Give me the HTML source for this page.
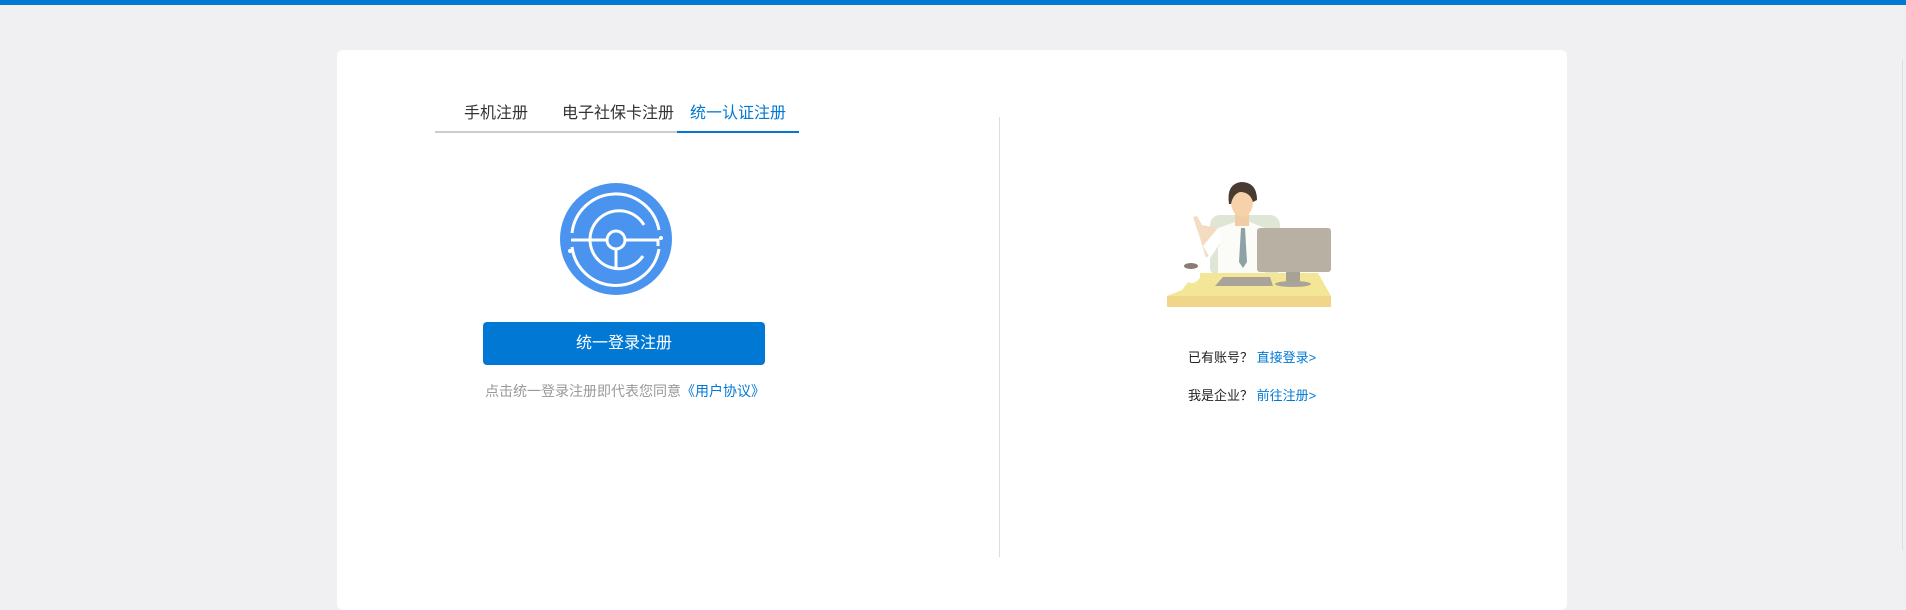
<!DOCTYPE html>
<html><head><meta charset="utf-8"><style>
body{margin:0;width:1906px;height:550px;background:#f0f0f2;font-family:"Liberation Sans","Noto Sans CJK SC",sans-serif;position:relative;overflow:hidden}
.top{position:absolute;left:0;top:0;width:1906px;height:5px;background:#0078d4}
.card{position:absolute;left:337px;top:50px;width:1230px;height:560px;background:#fff;border-radius:6px}
.abs{position:absolute}
.tab{position:absolute;top:99px;font-size:16px;color:#333;white-space:nowrap}
</style></head><body>
<div class="top"></div>
<div class="card"></div>
<div class="tab" style="left:464px">手机注册</div>
<div class="tab" style="left:562px">电子社保卡注册</div>
<div class="tab" style="left:690px;color:#0078d4">统一认证注册</div>
<div class="abs" style="left:435px;top:131px;width:242px;height:2px;background:#ccc"></div>
<div class="abs" style="left:677px;top:131px;width:122px;height:2px;background:#0078d4"></div>
<svg class="abs" style="left:560px;top:183px" width="112" height="112" viewBox="0 0 112 112">
<circle cx="56" cy="56" r="56" fill="#4a94ef"/>
<path d="M12 50 A44 44 0 0 1 99 47" fill="none" stroke="#fff" stroke-width="3"/>
<path d="M99 66 A44 44 0 0 1 12 64" fill="none" stroke="#fff" stroke-width="3"/>
<path d="M11 57 H98 V63" fill="none" stroke="#fff" stroke-width="3"/>
<path d="M83 73 A29 29 0 1 1 84 42" fill="none" stroke="#fff" stroke-width="3"/>
<circle cx="56" cy="57" r="9" fill="#4a94ef" stroke="#fff" stroke-width="3"/>
<path d="M56 66 V86" stroke="#fff" stroke-width="3"/>
<circle cx="10" cy="68" r="2" fill="#fff"/><circle cx="101" cy="55" r="2" fill="#fff"/>
</svg>
<div class="abs" style="left:483px;top:322px;width:282px;height:43px;background:#0078d4;border-radius:4px;color:#fff;font-size:16px;line-height:43px;text-align:center">统一登录注册</div>
<div class="abs" style="left:485px;top:381px;font-size:14px;color:#999;white-space:nowrap">点击统一登录注册即代表您同意<span style="color:#0078d4">《用户协议》</span></div>
<div class="abs" style="left:999px;top:117px;width:1px;height:440px;background:#ddd"></div>
<svg class="abs" style="left:1100px;top:150px" width="300" height="170" viewBox="0 0 300 170">
<rect x="110" y="65" width="70" height="62" rx="10" fill="#dfe6d6"/>
<path d="M118 78 L135 72 L150 72 L165 78 L165 124 L118 124Z" fill="#fbfbf8"/>
<path d="M100 88 L93 67 L97 66 L102 75 L118 78 L120 95 L106 108Z" fill="#f3dcc2"/>
<path d="M103 96 L118 78 L121 92 L110 108Z" fill="#fff"/>
<path d="M141 78 L145 78 L147 112 L143 118 L139 112Z" fill="#8ea2a5"/>
<rect x="135" y="62" width="14" height="14" fill="#f1cda6"/>
<ellipse cx="142" cy="52" rx="11" ry="15" fill="#f6d1aa"/>
<path d="M129 54 Q126 34 141 32 Q157 32 157 50 L153 52 Q150 42 140 42 Q133 44 131 54Z" fill="#4a3b31"/>
<path d="M82 140 L95 123 L218 123 L231 146 L67 146 Z" fill="#f3e797"/>
<path d="M67 146 H231 V157 H67Z" fill="#f0d68a"/>
<path d="M115 136 L123 127 L170 127 L173 136Z" fill="#aaa39a"/>
<rect x="157" y="78" width="74" height="44" rx="3" fill="#b8b0a2"/>
<rect x="186" y="122" width="14" height="10" fill="#a8a196"/>
<ellipse cx="193" cy="134" rx="18" ry="3" fill="#aaa39a"/>
<path d="M84 118 H100 V128 Q92 138 84 128Z" fill="#fff"/>
<ellipse cx="91" cy="116" rx="7" ry="3" fill="#8a7c74"/>
</svg>
<div class="abs" style="left:1188px;top:347px;font-size:13px;color:#222;white-space:nowrap">已有账号？ <span style="color:#0078d4">直接登录&gt;</span></div>
<div class="abs" style="left:1188px;top:385px;font-size:13px;color:#222;white-space:nowrap">我是企业？ <span style="color:#0078d4">前往注册&gt;</span></div>
<div class="abs" style="left:1902px;top:60px;width:1px;height:490px;background:#ddd"></div>
</body></html>
